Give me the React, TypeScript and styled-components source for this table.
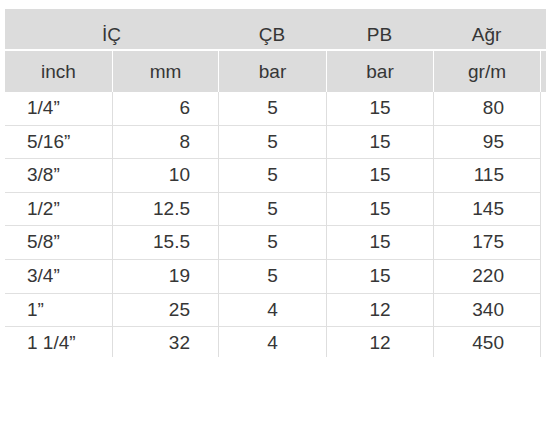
import styled, { createGlobalStyle } from "styled-components"

const GlobalStyle = createGlobalStyle`
    html, body {
        margin: 0;
        padding: 0;
        background: #fff;
        overflow: hidden;
    }
`

const COLS = "107px 106px 108px 107px 107px 1fr"

const Sheet = styled.div`
    box-sizing: border-box;
    height: 357px;
    width: 546px;
    padding: 9px 0 0 5px;
    overflow: hidden;
    font-family: "Liberation Sans", Arial, sans-serif;
    font-size: 19px;
    color: #363636;
`

const Table = styled.div`
    width: 620px;
`

const HeadRow = styled.div<{ $first?: boolean }>`
    display: grid;
    grid-template-columns: ${COLS};
    background: #dcdcdc;
    box-sizing: border-box;
    height: ${p => (p.$first ? "40px" : "41px")};
    margin-bottom: ${p => (p.$first ? "2px" : "0")};
`

const HeadCell = styled.div<{ $span?: number; $first?: boolean; $line?: boolean }>`
    grid-column: span ${p => p.$span ?? 1};
    text-align: center;
    box-sizing: border-box;
    padding-top: ${p => (p.$first ? "11px" : "0")};
    line-height: ${p => (p.$first ? "29px" : "41px")};
    border-left: ${p => (p.$line ? "1px solid #fff" : "none")};
    white-space: nowrap;
`

const BodyRow = styled.div`
    display: grid;
    grid-template-columns: ${COLS};
    height: 33.6px;
`

const Cell = styled.div<{ $align: "left" | "right" | "center"; $pad?: number; $line?: boolean; $empty?: boolean }>`
    box-sizing: border-box;
    text-align: ${p => p.$align};
    padding-left: ${p => (p.$align === "left" ? `${p.$pad ?? 0}px` : "0")};
    padding-right: ${p => (p.$align === "right" ? `${p.$pad ?? 0}px` : "0")};
    line-height: 32.6px;
    border-left: ${p => (p.$line ? "1px solid #dedede" : "none")};
    border-bottom: ${p => (p.$empty ? "none" : "1px solid #e0e0e0")};
    white-space: nowrap;
`

const rows: [string, string, string, string, string][] = [
    ["1/4\u201d", "6", "5", "15", "80"],
    ["5/16\u201d", "8", "5", "15", "95"],
    ["3/8\u201d", "10", "5", "15", "115"],
    ["1/2\u201d", "12.5", "5", "15", "145"],
    ["5/8\u201d", "15.5", "5", "15", "175"],
    ["3/4\u201d", "19", "5", "15", "220"],
    ["1\u201d", "25", "4", "12", "340"],
    ["1 1/4\u201d", "32", "4", "12", "450"],
]

function App() {
    return (
        <>
            <GlobalStyle />
            <Sheet>
                <Table>
                    <HeadRow $first>
                        <HeadCell $first $span={2}>İÇ</HeadCell>
                        <HeadCell $first>ÇB</HeadCell>
                        <HeadCell $first>PB</HeadCell>
                        <HeadCell $first>Ağr</HeadCell>
                        <HeadCell $first />
                    </HeadRow>
                    <HeadRow>
                        <HeadCell>inch</HeadCell>
                        <HeadCell $line>mm</HeadCell>
                        <HeadCell $line>bar</HeadCell>
                        <HeadCell $line>bar</HeadCell>
                        <HeadCell $line>gr/m</HeadCell>
                        <HeadCell $line />
                    </HeadRow>
                    {rows.map(r => (
                        <BodyRow key={r[0]}>
                            <Cell $align="left" $pad={22}>{r[0]}</Cell>
                            <Cell $align="right" $pad={28} $line>{r[1]}</Cell>
                            <Cell $align="center" $line>{r[2]}</Cell>
                            <Cell $align="center" $line>{r[3]}</Cell>
                            <Cell $align="right" $pad={36} $line>{r[4]}</Cell>
                            <Cell $align="left" $line $empty />
                        </BodyRow>
                    ))}
                </Table>
            </Sheet>
        </>
    )
}

export default App
